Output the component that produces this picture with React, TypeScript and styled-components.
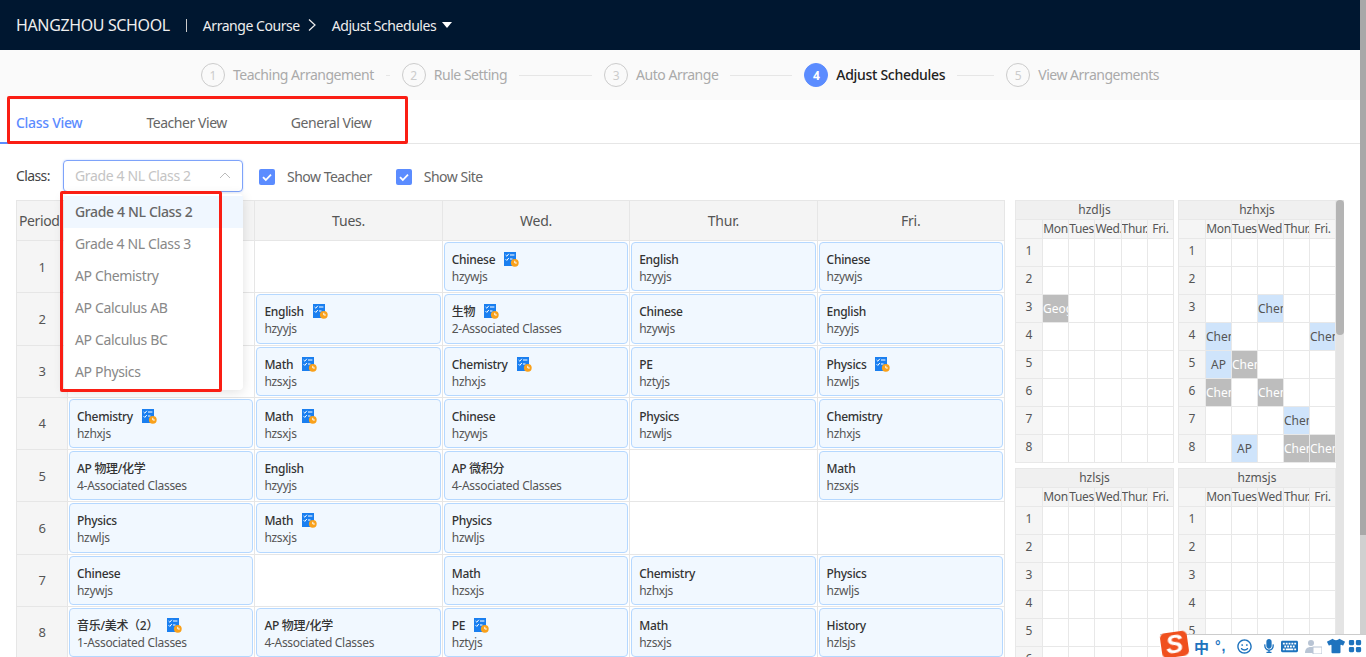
import React from "react";
import styled, { createGlobalStyle } from "styled-components";
import { FaRegSmile, FaMicrophone, FaKeyboard, FaTshirt } from "react-icons/fa";
import { BsGridFill } from "react-icons/bs";

const Global = createGlobalStyle`
  html, body { overflow: hidden; }
  body {
    margin: 0;
    background: #fff;
    color: #555;
    font-family: "Noto Sans", "Noto Sans CJK SC", sans-serif;
    font-size: 14px;
  }
  * { box-sizing: border-box; }
`;

const Shell = styled.div`
  display: flex;
  height: 657px;
  overflow: hidden;
`;
const Page = styled.div`
  position: relative;
  flex: 1;
  min-width: 0;
`;
const Rail = styled.div<{ $w: number; $track: string }>`
  flex: none;
  width: ${(p) => p.$w}px;
  background: ${(p) => p.$track};
`;
const Thumb = styled.div<{ $h: number; $color: string; $r?: number }>`
  height: ${(p) => p.$h}px;
  background: ${(p) => p.$color};
  border-radius: ${(p) => p.$r ?? 0}px;
`;

const Header = styled.header`
  height: 50px;
  background: #001730;
  color: #eee;
  display: flex;
  align-items: center;
  padding-left: 16px;
  font-size: 14px;
`;
const Brand = styled.span`
  font-size: 16px;
  letter-spacing: -0.37px;
`;
const Divider = styled.span`
  width: 1px;
  height: 13px;
  background: #ccc;
  margin: 0 16px;
`;
const Crumb = styled.span`
  letter-spacing: -0.45px;
`;
const CrumbSep = styled.svg`
  width: 10px;
  height: 14px;
  margin: 0 15px 0 7px;
`;
const Caret = styled.span`
  width: 0;
  height: 0;
  margin-left: 6px;
  border-left: 5px solid transparent;
  border-right: 5px solid transparent;
  border-top: 6px solid #fff;
`;

const Steps = styled.nav`
  height: 50px;
  background: #fafafa;
  display: flex;
  align-items: center;
  justify-content: center;
  gap: 12px;
`;
const Step = styled.div`
  display: flex;
  align-items: center;
  gap: 8px;
`;
const StepDot = styled.span<{ $on?: boolean }>`
  width: 24px;
  height: 24px;
  border-radius: 50%;
  display: flex;
  align-items: center;
  justify-content: center;
  font-size: 12px;
  font-weight: ${(p) => (p.$on ? 700 : 400)};
  border: 1px solid ${(p) => (p.$on ? "#5b8cff" : "#ccc")};
  background: ${(p) => (p.$on ? "#5b8cff" : "transparent")};
  color: ${(p) => (p.$on ? "#fff" : "#ccc")};
`;
const StepText = styled.span<{ $on?: boolean }>`
  padding-bottom: 2px;
  letter-spacing: ${(p) => (p.$on ? -0.3 : -0.48)}px;
  color: ${(p) => (p.$on ? "#222" : "#aaa")};
  font-weight: ${(p) => (p.$on ? 500 : 400)};
`;
const StepLine = styled.span<{ $w: number }>`
  height: 1px;
  background: #e6e6e6;
  width: ${(p) => p.$w}px;
`;

const Tabs = styled.div`
  height: 44px;
  display: flex;
  gap: 32px;
  border-bottom: 1px solid #e6e6e6;
`;
const Tab = styled.div<{ $on?: boolean }>`
  padding: 3px 16px 0;
  display: flex;
  align-items: center;
  height: 44px;
  letter-spacing: ${(p) => (p.$on ? -0.3 : -0.45)}px;
  color: ${(p) => (p.$on ? "#5b8cff" : "#666")};
  font-weight: ${(p) => (p.$on ? 500 : 400)};
  border-bottom: 2px solid ${(p) => (p.$on ? "#5b8cff" : "transparent")};
`;

const Toolbar = styled.div`
  height: 56px;
  padding: 8px 0 0 16px;
  display: flex;
  align-items: center;
`;
const FieldLabel = styled.span`
  color: #444;
  width: 47px;
  margin-bottom: 2px;
  letter-spacing: -0.6px;
`;
const Select = styled.div`
  width: 180px;
  height: 32px;
  border: 1px solid #7ea3fa;
  border-radius: 4px;
  box-shadow: 0 0 2px rgba(91, 140, 255, 0.4);
  padding: 0 11px 2px;
  display: flex;
  align-items: center;
  justify-content: space-between;
  color: #c4c4c4;
  letter-spacing: -0.37px;
`;
const Check = styled.label`
  display: flex;
  align-items: center;
  gap: 12px;
  margin-left: 16px;
  color: #666;
  letter-spacing: -0.5px;
  & + & {
    margin-left: 24px;
  }
`;
const CheckBox = styled.span`
  width: 16px;
  height: 16px;
  margin-top: 2px;
  border-radius: 2px;
  background: #5b8cff;
  display: flex;
  align-items: center;
  justify-content: center;
`;

const Workspace = styled.div`
  display: flex;
  gap: 10px;
  padding-left: 16px;
  align-items: flex-start;
`;

const Grid = styled.div`
  width: 989px;
  display: grid;
  grid-template-columns: 50px repeat(5, 1fr);
  grid-template-rows: 39px;
  grid-auto-rows: 51.25px;
  gap: 1px;
  background: #e6e6e6;
  padding: 1px 1px 0 1px;
`;
const HeadCell = styled.div`
  background: #f4f4f4;
  color: #555;
  display: flex;
  align-items: center;
  justify-content: center;
  white-space: nowrap;
  overflow: hidden;
  letter-spacing: -0.2px;
`;
const PeriodHead = styled(HeadCell)`
  justify-content: flex-start;
  padding-left: 2px;
  letter-spacing: -0.4px;
`;
const PeriodCell = styled(HeadCell)`
  background: #f5f5f5;
  font-size: 13px;
`;
const Slot = styled.div`
  background: #fff;
  padding: 1px;
  min-width: 0;
`;
const Card = styled.div`
  height: 100%;
  border: 1px solid #b5d8ff;
  border-radius: 4px;
  background: #f1f8ff;
  padding: 3px 7px 0;
  display: flex;
  flex-direction: column;
  justify-content: center;
  font-size: 12px;
  line-height: 17px;
`;
const CardTitle = styled.div`
  color: #333;
  font-weight: 500;
  display: flex;
  align-items: center;
  gap: 9px;
  letter-spacing: -0.3px;
`;
const CardSub = styled.div`
  color: #555;
  letter-spacing: -0.3px;
`;

const Side = styled.aside`
  width: 329px;
  height: 457px;
  display: flex;
  overflow: hidden;
`;
const SideGrid = styled.div`
  flex: 1;
  min-width: 0;
  display: grid;
  grid-template-columns: 159px 158px;
  align-content: start;
  column-gap: 4px;
  row-gap: 5px;
`;
const Mini = styled.div`
  display: grid;
  grid-template-columns: 26px repeat(5, 1fr);
  grid-template-rows: 18px 18px;
  grid-auto-rows: 27px;
  gap: 1px;
  background: #e8e8e8;
  padding: 1px;
  font-size: 12px;
  color: #555;
`;
const MiniTitle = styled.div`
  grid-column: 1 / -1;
  background: #f0f0f0;
  text-align: center;
  line-height: 18px;
`;
const MiniHead = styled.div`
  background: #f5f5f5;
  text-align: center;
  white-space: nowrap;
  overflow: hidden;
  line-height: 18px;
  letter-spacing: -0.3px;
`;
const MiniNo = styled.div`
  background: #f5f5f5;
  text-align: center;
  line-height: 24px;
`;
const MiniCell = styled.div<{ $kind?: "busy" | "own" }>`
  background: ${(p) => (p.$kind === "busy" ? "#bdbdbd" : p.$kind === "own" ? "#cfe4fb" : "#fff")};
  color: ${(p) => (p.$kind === "busy" ? "#fff" : "#555")};
  text-align: center;
  line-height: 27px;
  white-space: nowrap;
  overflow: hidden;
`;

const Menu = styled.ul`
  position: absolute;
  left: 64px;
  top: 194px;
  width: 179px;
  margin: 0;
  padding: 2px 0;
  list-style: none;
  background: #fff;
  border-radius: 4px;
  box-shadow: 0 2px 12px rgba(0, 0, 0, 0.12);
`;
const MenuItem = styled.li<{ $on?: boolean }>`
  height: 32px;
  line-height: 32px;
  padding-left: 11px;
  letter-spacing: -0.35px;
  color: ${(p) => (p.$on ? "#666" : "#888")};
  font-weight: ${(p) => (p.$on ? 500 : 400)};
  background: ${(p) => (p.$on ? "#f0f7ff" : "transparent")};
`;
const Callout = styled.div<{ $x: number; $y: number; $w: number; $h: number }>`
  position: absolute;
  left: ${(p) => p.$x}px;
  top: ${(p) => p.$y}px;
  width: ${(p) => p.$w}px;
  height: ${(p) => p.$h}px;
  border: 3px solid #fa1e14;
  border-radius: 2px;
  pointer-events: none;
`;

const Ime = styled.div`
  position: fixed;
  right: 0;
  bottom: 0;
  width: 206px;
  height: 23px;
  background: #fff;
  border-top: 1px solid #ccc;
  display: flex;
  align-items: center;
  color: #1e73be;
  padding-left: 34px;
`;
const ImeLogo = styled.div`
  position: absolute;
  left: 1px;
  bottom: 0;
  width: 27px;
  height: 25px;
  background: #f0501e;
  border-radius: 5px;
  transform: rotate(-8deg);
  color: #fff;
  font: italic 700 26px/25px "Liberation Sans", sans-serif;
  text-align: center;
`;
const ImeZh = styled.span`
  font: 700 15px/1 "Noto Sans CJK SC", sans-serif;
  width: 21px;
`;
const ImeDots = styled.span`
  font: 700 14px/1 "Liberation Sans", sans-serif;
  width: 22px;
  letter-spacing: 1px;
`;
const ImeSlot = styled.span<{ $w: number }>`
  width: ${(p) => p.$w}px;
  display: flex;
  align-items: center;
`;

const TaskIcon = () => (
  <svg width="15" height="15" viewBox="0 0 15 15" style={{ flex: "none" }}>
    <rect x="0" y="0" width="12" height="14" fill="#1a7ff0" />
    <path d="M1.6 3l1.2 1.2L4.8 1.8M1.6 7.2l1.2 1.2L4.8 6" stroke="#fff" strokeWidth="1" fill="none" />
    <path d="M6 3H10.4M6 7H8.5" stroke="#fff" strokeWidth="1" fill="none" />
    <circle cx="10.8" cy="10.8" r="3.9" fill="#f9a11b" />
    <path d="M10.8 8.8V11H12.8" stroke="#fff" strokeWidth="1" fill="none" />
  </svg>
);

type C = [string, string, boolean?] | null;
const rows: C[][] = [
  [null, null, ["Chinese", "hzywjs", true], ["English", "hzyyjs"], ["Chinese", "hzywjs"]],
  [null, ["English", "hzyyjs", true], ["生物", "2-Associated Classes", true], ["Chinese", "hzywjs"], ["English", "hzyyjs"]],
  [null, ["Math", "hzsxjs", true], ["Chemistry", "hzhxjs", true], ["PE", "hztyjs"], ["Physics", "hzwljs", true]],
  [["Chemistry", "hzhxjs", true], ["Math", "hzsxjs", true], ["Chinese", "hzywjs"], ["Physics", "hzwljs"], ["Chemistry", "hzhxjs"]],
  [["AP 物理/化学", "4-Associated Classes"], ["English", "hzyyjs"], ["AP 微积分", "4-Associated Classes"], null, ["Math", "hzsxjs"]],
  [["Physics", "hzwljs"], ["Math", "hzsxjs", true], ["Physics", "hzwljs"], null, null],
  [["Chinese", "hzywjs"], null, ["Math", "hzsxjs"], ["Chemistry", "hzhxjs"], ["Physics", "hzwljs"]],
  [["音乐/美术（2）", "1-Associated Classes", true], ["AP 物理/化学", "4-Associated Classes"], ["PE", "hztyjs", true], ["Math", "hzsxjs"], ["History", "hzlsjs"]],
];

type M = Record<string, [string, "busy" | "own"]>;
const teachers: [string, M][] = [
  ["hzdljs", { "3-0": ["Geography", "busy"] }],
  ["hzhxjs", {
    "3-2": ["Chemistry", "own"], "4-0": ["Chemistry", "own"], "4-4": ["Chemistry", "own"],
    "5-0": ["AP", "own"], "5-1": ["Chemistry", "busy"], "6-0": ["Chemistry", "busy"],
    "6-2": ["Chemistry", "busy"], "7-3": ["Chemistry", "own"], "8-1": ["AP", "own"],
    "8-3": ["Chemistry", "busy"], "8-4": ["Chemistry", "busy"],
  }],
  ["hzlsjs", {}],
  ["hzmsjs", {}],
];
const days = ["Mon", "Tues.", "Wed.", "Thur.", "Fri."];
const classes = ["Grade 4 NL Class 2", "Grade 4 NL Class 3", "AP Chemistry", "AP Calculus AB", "AP Calculus BC", "AP Physics"];
const steps: [number, string, number][] = [
  [1, "Teaching Arrangement", 4],
  [2, "Rule Setting", 73],
  [3, "Auto Arrange", 62],
  [4, "Adjust Schedules", 37],
  [5, "View Arrangements", 0],
];

const Tick = () => (
  <svg width="12" height="12" viewBox="0 0 12 12">
    <path d="M2 6.2l2.8 2.8L10 3.6" stroke="#fff" strokeWidth="1.8" fill="none" />
  </svg>
);

export default function App() {
  return (
    <Shell>
      <Global />
      <Page>
        <Header>
          <Brand>HANGZHOU SCHOOL</Brand>
          <Divider />
          <Crumb>Arrange Course</Crumb>
          <CrumbSep viewBox="0 0 10 14">
            <path d="M2 1.5l6 5.5-6 5.5" stroke="#eee" strokeWidth="1.2" fill="none" />
          </CrumbSep>
          <Crumb>Adjust Schedules</Crumb>
          <Caret />
        </Header>
        <Steps>
          {steps.map(([n, label, w]) => (
            <React.Fragment key={n}>
              <Step>
                <StepDot $on={n === 4}>{n}</StepDot>
                <StepText $on={n === 4}>{label}</StepText>
              </Step>
              {w > 0 && <StepLine $w={w} />}
            </React.Fragment>
          ))}
        </Steps>
        <Tabs>
          <Tab $on>Class View</Tab>
          <Tab>Teacher View</Tab>
          <Tab>General View</Tab>
        </Tabs>
        <Toolbar>
          <FieldLabel>Class:</FieldLabel>
          <Select>
            Grade 4 NL Class 2
            <svg width="12" height="8" viewBox="0 0 12 8">
              <path d="M1 7l5-5 5 5" stroke="#bbb" strokeWidth="1" fill="none" />
            </svg>
          </Select>
          <Check>
            <CheckBox><Tick /></CheckBox>
            Show Teacher
          </Check>
          <Check>
            <CheckBox><Tick /></CheckBox>
            Show Site
          </Check>
        </Toolbar>
        <Workspace>
          <Grid>
            <PeriodHead>Period:</PeriodHead>
            {days.map((d) => (
              <HeadCell key={d}>{d === "Mon" ? "Mon." : d}</HeadCell>
            ))}
            {rows.map((row, i) => (
              <React.Fragment key={i}>
                <PeriodCell>{i + 1}</PeriodCell>
                {row.map((c, j) => (
                  <Slot key={j}>
                    {c && (
                      <Card>
                        <CardTitle>
                          {c[0]}
                          {c[2] && <TaskIcon />}
                        </CardTitle>
                        <CardSub>{c[1]}</CardSub>
                      </Card>
                    )}
                  </Slot>
                ))}
              </React.Fragment>
            ))}
          </Grid>
          <Side>
            <SideGrid>
              {teachers.map(([name, cells]) => (
                <Mini key={name}>
                  <MiniTitle>{name}</MiniTitle>
                  <MiniHead />
                  {days.map((d) => (
                    <MiniHead key={d}>{d}</MiniHead>
                  ))}
                  {[1, 2, 3, 4, 5, 6, 7, 8].map((r) => (
                    <React.Fragment key={r}>
                      <MiniNo>{r}</MiniNo>
                      {[0, 1, 2, 3, 4].map((d) => {
                        const cell = cells[`${r}-${d}`];
                        return (
                          <MiniCell key={d} $kind={cell?.[1]}>
                            {cell?.[0]}
                          </MiniCell>
                        );
                      })}
                    </React.Fragment>
                  ))}
                </Mini>
              ))}
            </SideGrid>
            <Rail $w={8} $track="#e4e4e4">
              <Thumb $h={135} $color="#b4b4b4" $r={4} />
            </Rail>
          </Side>
        </Workspace>
        <Menu>
          {classes.map((c, i) => (
            <MenuItem key={c} $on={i === 0}>{c}</MenuItem>
          ))}
        </Menu>
        <Callout $x={7} $y={96} $w={401} $h={48} />
        <Callout $x={60} $y={191} $w={162} $h={201} />
      </Page>
      <Rail $w={6} $track="#d0d0d0">
        <Thumb $h={535} $color="#a8a8a8" />
      </Rail>
      <Ime>
        <ImeLogo>S</ImeLogo>
        <ImeZh>中</ImeZh>
        <ImeDots>°,</ImeDots>
        <ImeSlot $w={25}><FaRegSmile size={15} /></ImeSlot>
        <ImeSlot $w={19}><FaMicrophone size={14} /></ImeSlot>
        <ImeSlot $w={24}><FaKeyboard size={17} /></ImeSlot>
        <ImeSlot $w={22}>
          <svg width="17" height="15" viewBox="0 0 17 15">
            <circle cx="6" cy="4" r="3" fill="#b8c4d4" />
            <path d="M0 14c0-4 2-6 6-6s6 2 6 6z" fill="#b8c4d4" />
            <rect x="8" y="8" width="9" height="7" fill="#fff" stroke="#b8c4d4" />
          </svg>
        </ImeSlot>
        <ImeSlot $w={21}><FaTshirt size={18} /></ImeSlot>
        <ImeSlot $w={14}><BsGridFill size={14} /></ImeSlot>
      </Ime>
    </Shell>
  );
}
